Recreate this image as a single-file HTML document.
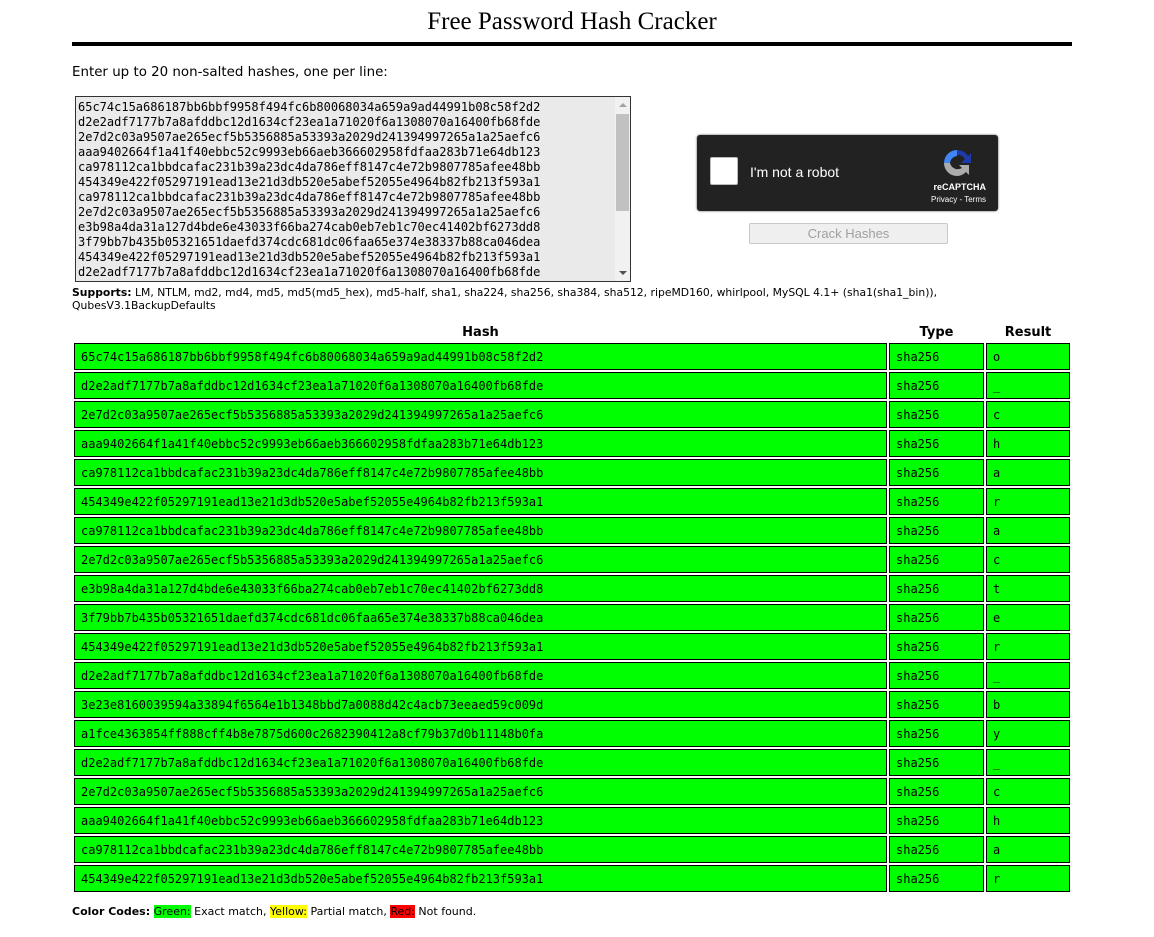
<!DOCTYPE html>
<html><head><meta charset="utf-8"><style>
body{margin:0;background:#fff;font-family:"DejaVu Sans",Verdana,sans-serif;color:#000;width:1154px;height:937px;overflow:hidden;position:relative}
.title{position:absolute;top:8px;left:0;width:1144px;text-align:center;font-family:"Liberation Serif",serif;font-size:25px}
.line{position:absolute;left:72px;top:42px;width:1000px;height:4px;background:#000}
.lbl{position:absolute;left:72px;top:65px;font-size:13.4px}
.ta{position:absolute;left:75px;top:96px;width:556px;height:186px;border:1px solid #333;background:#eaeaea;box-sizing:border-box;overflow:hidden}
.ta pre{margin:0;padding:3px 2px;font-family:"DejaVu Sans Mono",monospace;font-size:12px;line-height:15px;color:#000}
.sb{position:absolute;right:0;top:0;width:15px;height:184px;background:#f1f1f1}
.sb .th{position:absolute;left:1px;top:17px;width:13px;height:97px;background:#c1c1c1}
.sb .up,.sb .dn{position:absolute;left:4px;width:0;height:0;border-left:4px solid transparent;border-right:4px solid transparent}
.sb .up{top:6px;border-bottom:4px solid #a3a3a3}.sb .dn{bottom:6px;border-top:4px solid #505050}
.sup{position:absolute;left:72px;top:286px;font-size:10.8px;line-height:13px;width:900px}
.rc{position:absolute;left:697px;top:135px;width:301px;height:76px;background:#222;border-radius:3px;box-shadow:0 0 2px #555}
.cb{position:absolute;left:13px;top:22px;width:26px;height:26px;background:#fff;border:1px solid #bbb;border-radius:2px}
.rc .t{position:absolute;left:53px;top:29px;color:#fff;font-family:"Liberation Sans",sans-serif;font-size:14px}
.rc .l1{position:absolute;right:12px;top:47px;color:#fff;font-family:"Liberation Sans",sans-serif;font-size:9px;font-weight:bold}
.rc .l2{position:absolute;right:12px;top:60px;color:#fff;font-family:"Liberation Sans",sans-serif;font-size:8px}
.btn{position:absolute;left:749px;top:223px;width:199px;height:21px;box-sizing:border-box;border:1px solid #c8c8c8;background:#efefef;color:#a0a0a0;font-family:"Liberation Sans",sans-serif;font-size:13px;text-align:center;line-height:19px;border-radius:2px}
table{position:absolute;left:72px;top:322px;width:1000px;border-spacing:2px;font-size:12px}
th{font-size:13px;height:17px;padding:0;text-align:center}
td{background:#00ff00;border:1px solid #000;height:27px;padding:0 0 0 6px;font-family:"DejaVu Sans Mono",monospace;font-size:12px;box-sizing:border-box}
.cc{position:absolute;left:72px;top:905px;font-size:11px}
.g{background:#00ff00}.y{background:#ffff00}.r{background:#ff0000}
</style></head><body>
<div class="title">Free Password Hash Cracker</div>
<div class="line"></div>
<div class="lbl">Enter up to 20 non-salted hashes, one per line:</div>
<div class="ta"><pre>65c74c15a686187bb6bbf9958f494fc6b80068034a659a9ad44991b08c58f2d2
d2e2adf7177b7a8afddbc12d1634cf23ea1a71020f6a1308070a16400fb68fde
2e7d2c03a9507ae265ecf5b5356885a53393a2029d241394997265a1a25aefc6
aaa9402664f1a41f40ebbc52c9993eb66aeb366602958fdfaa283b71e64db123
ca978112ca1bbdcafac231b39a23dc4da786eff8147c4e72b9807785afee48bb
454349e422f05297191ead13e21d3db520e5abef52055e4964b82fb213f593a1
ca978112ca1bbdcafac231b39a23dc4da786eff8147c4e72b9807785afee48bb
2e7d2c03a9507ae265ecf5b5356885a53393a2029d241394997265a1a25aefc6
e3b98a4da31a127d4bde6e43033f66ba274cab0eb7eb1c70ec41402bf6273dd8
3f79bb7b435b05321651daefd374cdc681dc06faa65e374e38337b88ca046dea
454349e422f05297191ead13e21d3db520e5abef52055e4964b82fb213f593a1
d2e2adf7177b7a8afddbc12d1634cf23ea1a71020f6a1308070a16400fb68fde</pre><div class="sb"><div class="up"></div><div class="th"></div><div class="dn"></div></div></div>
<div class="sup"><b>Supports:</b> LM, NTLM, md2, md4, md5, md5(md5_hex), md5-half, sha1, sha224, sha256, sha384, sha512, ripeMD160, whirlpool, MySQL 4.1+ (sha1(sha1_bin)),<br>QubesV3.1BackupDefaults</div>
<div class="rc"><div class="cb"></div><div class="t">I'm not a robot</div>
<svg style="position:absolute;left:244px;top:12px" width="32" height="32" viewBox="0 0 32 32"><path d="M16 3a13 13 0 0 1 11 6l3-3v10H20l4-4a8 8 0 0 0-8-4z" fill="#1c3aa9"/><path d="M3 16A13 13 0 0 1 16 3v6a8 8 0 0 0-7 7z" fill="#4285f4"/><path d="M16 29A13 13 0 0 1 3 16h6a8 8 0 0 0 12 5l-3-3h10v10l-3-3a13 13 0 0 1-9 4z" fill="#ababab"/></svg>
<div class="l1">reCAPTCHA</div><div class="l2">Privacy - Terms</div></div>
<div class="btn">Crack Hashes</div>
<table>
<tr><th>Hash</th><th style="width:95px">Type</th><th style="width:84px">Result</th></tr>
<tr><td>65c74c15a686187bb6bbf9958f494fc6b80068034a659a9ad44991b08c58f2d2</td><td>sha256</td><td>o</td></tr>
<tr><td>d2e2adf7177b7a8afddbc12d1634cf23ea1a71020f6a1308070a16400fb68fde</td><td>sha256</td><td>_</td></tr>
<tr><td>2e7d2c03a9507ae265ecf5b5356885a53393a2029d241394997265a1a25aefc6</td><td>sha256</td><td>c</td></tr>
<tr><td>aaa9402664f1a41f40ebbc52c9993eb66aeb366602958fdfaa283b71e64db123</td><td>sha256</td><td>h</td></tr>
<tr><td>ca978112ca1bbdcafac231b39a23dc4da786eff8147c4e72b9807785afee48bb</td><td>sha256</td><td>a</td></tr>
<tr><td>454349e422f05297191ead13e21d3db520e5abef52055e4964b82fb213f593a1</td><td>sha256</td><td>r</td></tr>
<tr><td>ca978112ca1bbdcafac231b39a23dc4da786eff8147c4e72b9807785afee48bb</td><td>sha256</td><td>a</td></tr>
<tr><td>2e7d2c03a9507ae265ecf5b5356885a53393a2029d241394997265a1a25aefc6</td><td>sha256</td><td>c</td></tr>
<tr><td>e3b98a4da31a127d4bde6e43033f66ba274cab0eb7eb1c70ec41402bf6273dd8</td><td>sha256</td><td>t</td></tr>
<tr><td>3f79bb7b435b05321651daefd374cdc681dc06faa65e374e38337b88ca046dea</td><td>sha256</td><td>e</td></tr>
<tr><td>454349e422f05297191ead13e21d3db520e5abef52055e4964b82fb213f593a1</td><td>sha256</td><td>r</td></tr>
<tr><td>d2e2adf7177b7a8afddbc12d1634cf23ea1a71020f6a1308070a16400fb68fde</td><td>sha256</td><td>_</td></tr>
<tr><td>3e23e8160039594a33894f6564e1b1348bbd7a0088d42c4acb73eeaed59c009d</td><td>sha256</td><td>b</td></tr>
<tr><td>a1fce4363854ff888cff4b8e7875d600c2682390412a8cf79b37d0b11148b0fa</td><td>sha256</td><td>y</td></tr>
<tr><td>d2e2adf7177b7a8afddbc12d1634cf23ea1a71020f6a1308070a16400fb68fde</td><td>sha256</td><td>_</td></tr>
<tr><td>2e7d2c03a9507ae265ecf5b5356885a53393a2029d241394997265a1a25aefc6</td><td>sha256</td><td>c</td></tr>
<tr><td>aaa9402664f1a41f40ebbc52c9993eb66aeb366602958fdfaa283b71e64db123</td><td>sha256</td><td>h</td></tr>
<tr><td>ca978112ca1bbdcafac231b39a23dc4da786eff8147c4e72b9807785afee48bb</td><td>sha256</td><td>a</td></tr>
<tr><td>454349e422f05297191ead13e21d3db520e5abef52055e4964b82fb213f593a1</td><td>sha256</td><td>r</td></tr>
</table>
<div class="cc"><b>Color Codes:</b> <span class="g">Green:</span> Exact match, <span class="y">Yellow:</span> Partial match, <span class="r">Red:</span> Not found.</div>
</body></html>
